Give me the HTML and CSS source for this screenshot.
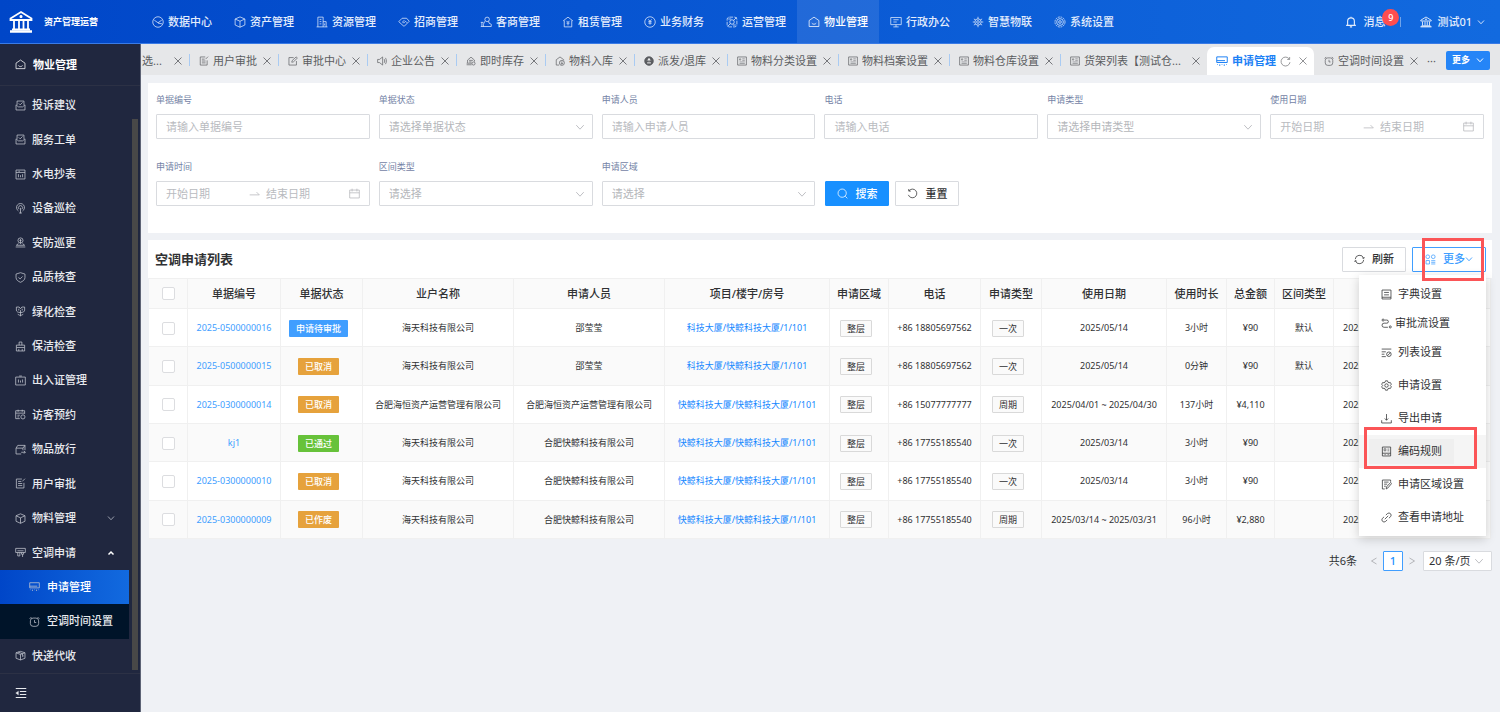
FILE: index.html
```html
<!DOCTYPE html>
<html lang="zh-CN">
<head>
<meta charset="utf-8">
<title>资产管理运营</title>
<link rel="stylesheet" href="styles.css">
</head>
<body>
<svg class="sprite" aria-hidden="true">
  <symbol id="bank" viewBox="0 0 24 24"><path d="M1.500 8.500 12 2l10.500 6.500v1.500h-21z" stroke-width="1.800"/><path d="M1 21.500h22" stroke-width="2.500"/><path d="M3 19.500h18M5 11v8M10 11v8M14.500 11v8M19 11v8" stroke-width="1.800"/><circle cx="12" cy="6.500" r="1" fill="currentColor"/></symbol>
  <symbol id="gauge" viewBox="0 0 16 16"><circle cx="8" cy="8" r="7"/><path d="M3 5.500 8 9l5-3.500M8 9.500l5.500 1"/></symbol>
  <symbol id="cube" viewBox="0 0 16 16"><path d="M8 1.200 14.500 4v8L8 15 1.500 12V4zM1.500 4 8 7l6.500-3M8 7v8"/></symbol>
  <symbol id="building" viewBox="0 0 16 16"><path d="M2.500 14.500v-13h7v13M9.500 7.500h4v7M.8 14.500h14.500M4.800 4.500h2.400M4.800 7.500h2.400M4.800 10.500h2.400M11.500 10v2.500"/></symbol>
  <symbol id="shake" viewBox="0 0 16 16"><path d="M1 7.500 5.500 3h6L15 7l-6.500 6.500L7 13zM8.500 5.500 6 8l1.500 1.500L10 7l2 2"/></symbol>
  <symbol id="merchant" viewBox="0 0 16 16"><circle cx="9.500" cy="4.500" r="3"/><path d="M6.500 7 4.500 11v3h10.500v-3l-3-1.500-.5-2.500M1 14h4M1 8.500h3.500M2.500 8.500V14"/></symbol>
  <symbol id="rent" viewBox="0 0 16 16"><path d="M1.500 6.500 8 1.500l6.500 5M3 6v8.500h10V6M6 6.500l2 2 2-2M8 8.500v4M6 9.500h4"/></symbol>
  <symbol id="yen" viewBox="0 0 16 16"><circle cx="8" cy="8" r="7"/><path d="m5.800 4.500 2.200 2.500 2.200-2.500M8 7v4.500M5.800 7.500h4.400M5.800 9.500h4.400"/></symbol>
  <symbol id="ops" viewBox="0 0 16 16"><rect x="1.500" y="1.500" width="13" height="13" rx="3" stroke-dasharray="5 1.500"/><circle cx="8" cy="8" r="3"/><path d="m2 14 4-4M10 6l4-4M3 4h4M9 12h4"/></symbol>
  <symbol id="home" viewBox="0 0 16 16"><path d="M8 1.500 14.500 6v8h-13V6zM5 9.500c1.500 2 4.500 2 6 0"/></symbol>
  <symbol id="monitor" viewBox="0 0 16 16"><path d="M1 2h14v9.500H1zM8 11.500v3M4.500 14.500h7M4.500 5h7M4.500 8h4.500"/></symbol>
  <symbol id="atom" viewBox="0 0 16 16"><circle cx="8" cy="8" r="1.800"/><circle cx="8" cy="8" r="4.200"/><path d="M8 1v3M8 12v3M1 8h2.500M12.500 8H15M2.500 4l2 1M13.500 4l-2 1M2.500 12l2-1M13.500 12l-2-1"/></symbol>
  <symbol id="gear" viewBox="0 0 16 16"><circle cx="8" cy="8" r="6.700" stroke-dasharray="2.500 1"/><circle cx="8" cy="8" r="4.500"/><circle cx="8" cy="8" r="1.800"/></symbol>
  <symbol id="bell" viewBox="0 0 16 16"><path d="M1.500 12.500h13M3.500 12V7a4.500 4.500 0 0 1 9 0v5M8 2.500V1M6.500 14.500h3"/></symbol>
  <symbol id="down" viewBox="0 0 16 16"><path d="m2 5 6 6.500L14 5"/></symbol>
  <symbol id="up" viewBox="0 0 16 16"><path d="m3 11 5-5 5 5"/></symbol>
  <symbol id="close" viewBox="0 0 16 16"><path d="m1 1 14 14M15 1 1 15"/></symbol>
  <symbol id="userdoc" viewBox="0 0 16 16"><path d="M10 1.500H2v13h11V7M4.500 5H9M4.500 8h6M4.500 11h6M10.500 5l4-4"/></symbol>
  <symbol id="edit" viewBox="0 0 16 16"><path d="M9 2.500H1.500v12h12V8M6 10l.5-2.500L13 1.500l2 1.800-6.500 6.200z"/></symbol>
  <symbol id="speaker" viewBox="0 0 16 16"><path d="M1 5.500h3l5-4v13l-5-4H1zM11.500 5c1 1.500 1 4.500 0 6M13.500 3c2 3 2 7 0 10"/></symbol>
  <symbol id="stock" viewBox="0 0 16 16"><path d="M2.500 11V6.500L8 1.800l5.500 4.700V9M1 11.500h8M1 14h8M5 7h6M5 9.500h4"/><circle cx="12" cy="12" r="2.500"/></symbol>
  <symbol id="inbound" viewBox="0 0 16 16"><path d="M6.500 14.500H2V6l6-4.500L14 6v1"/><circle cx="11" cy="11" r="4"/><path d="M11 8.500V13M9 11.500l2 1.500 2-1.500"/></symbol>
  <symbol id="dispatch" viewBox="0 0 16 16"><circle cx="8" cy="8" r="7" fill="currentColor"/><path d="M8 3.500v5M5.500 7 8 4.500 10.500 7M5 11h6" stroke="#fff" stroke-width="1.500"/></symbol>
  <symbol id="list" viewBox="0 0 16 16"><path d="M1 1.500h14v13H1z"/><path d="M4 4.500h2v2H4zM8.500 4.500h4M8.500 7h4M4 9.500h8.500M4 12h8.500" stroke-width=".8"/></symbol>
  <symbol id="aircon" viewBox="0 0 16 16"><path d="M1 2.500h14v7.500H1zM1 7.500h11M2 12.500v.8M5 12.500v2M8 12.500v.8M11 12.500v2M14 12.500v.8"/></symbol>
  <symbol id="clock" viewBox="0 0 16 16"><rect x="2" y="3" width="12" height="12" rx="4"/><path d="M8 6v3.500h2.500M1 4l2.500-2.500M15 4l-2.500-2.500"/></symbol>
  <symbol id="reload" viewBox="0 0 16 16"><path d="M13.500 4.500A6.500 6.500 0 1 0 14.500 9M14 1.500v3.500h-3.500"/></symbol>
  <symbol id="undo" viewBox="0 0 16 16"><path d="M3 4a6.300 6.300 0 1 1-1 6M2.500 1.500v3h3"/></symbol>
  <symbol id="sync" viewBox="0 0 16 16"><path d="M1.800 7.500A6.300 6.300 0 0 1 14 6M14.200 8.500A6.300 6.300 0 0 1 2 10M12.200 5.800l2 .7.800-2M3.800 10.200l-2-.7-.8 2"/></symbol>
  <symbol id="search" viewBox="0 0 16 16"><circle cx="7.500" cy="7.500" r="6"/><path d="m12 12 3 3"/></symbol>
  <symbol id="calendar" viewBox="0 0 16 16"><path d="M1 3h14v11.500H1zM1 7h14M4.500 1v4M11.500 1v4"/></symbol>
  <symbol id="swap" viewBox="0 0 16 16"><path d="M1 10h14l-4-4"/></symbol>
  <symbol id="mail" viewBox="0 0 16 16"><path d="M3 7V1.500h10V7M1.500 7v7.500h13V7L11 10H5zM5.500 5l2 2 3.500-3.500"/></symbol>
  <symbol id="meter" viewBox="0 0 16 16"><path d="M1.500 1.500h13v13h-13zM1.500 5h13M5 7.500V12M8 9v3M11 7.500V12M5 3.300h2"/></symbol>
  <symbol id="device" viewBox="0 0 16 16"><path d="M5 11.500a5.800 5.800 0 1 1 6 0M6 9a3 3 0 1 1 4 0M8 7v8M6 14.500h4"/></symbol>
  <symbol id="guard" viewBox="0 0 16 16"><circle cx="8" cy="5" r="3.700"/><path d="M8 3v7M6.500 5h3M5 9.500 2 12h12l-3-2.500M1 14.500h14"/></symbol>
  <symbol id="shield" viewBox="0 0 16 16"><path d="m8 1 6.500 2v5c0 3.500-3 5.500-6.500 7-3.500-1.500-6.500-3.500-6.500-7V3zM5 8l2.500 2L11 6.500"/></symbol>
  <symbol id="flower" viewBox="0 0 16 16"><path d="M2 1.500h4L8 4l2-2.500h4V6c0 2-2 3.500-6 3.500S2 8 2 6zM8 6v9M4 11.500c1 1.500 2 2 4 2s3-.5 4-2M5.500 4v2.500M10.500 4v2.500"/></symbol>
  <symbol id="clean" viewBox="0 0 16 16"><path d="M6 6V1.500h4V6M2 6h12v3.500H2zM2 9.500v5h12v-5M5.500 11.500v3M10.500 11.500v3"/></symbol>
  <symbol id="pass" viewBox="0 0 16 16"><path d="M1 3h14v11.500H1zM5 6.500V11M8 8v3M11 6.500V11M6 1.500h4"/></symbol>
  <symbol id="visit" viewBox="0 0 16 16"><path d="M7 14H1V2.500h13V7M1 6h13M4.500 1v3M10.500 1v3M3.500 9H7M3.500 11.500H6"/><circle cx="11.500" cy="11.500" r="3"/></symbol>
  <symbol id="goods" viewBox="0 0 16 16"><path d="M9 14.500H1.500V6h10v3M1.500 6 4 2h10.500L11.500 6M14.500 2v7M9 12h6l-2-2M15 12l-2 2"/></symbol>
  <symbol id="ac2" viewBox="0 0 16 16"><path d="M1 2h14v6H1zM3.500 5.500h9M4 8v5h3V8M9.500 8v2.500h3V8M11 10.500v4"/></symbol>
  <symbol id="parcel" viewBox="0 0 16 16"><path d="M8 2 14.500 4v8L8 14.500 1.500 12V4zM1.500 4 8 6.500 14.500 4M8 6.500v8M4.500 3l6.500 2.500v4l1.500-1"/></symbol>
  <symbol id="fold" viewBox="0 0 16 16"><path d="M1 2h14M6.500 6H15M6.500 10H15M1 14h14"/><path d="m4.500 5.500-3.500 2.500 3.500 2.500z" fill="currentColor" stroke-width=".5"/></symbol>
  <symbol id="grid" viewBox="0 0 16 16"><circle cx="4" cy="4" r="2.700"/><circle cx="12" cy="4" r="2.700"/><path d="M1.500 9.500h5v5h-5zM9 9.700h6M9 12.100h6M9 14.500h6"/></symbol>
  <symbol id="book" viewBox="0 0 16 16"><path d="M14.500 14.500h-13V1.500h13zM1.500 12h13M4.500 5h7M4.500 8.500h7"/></symbol>
  <symbol id="flow" viewBox="0 0 16 16"><circle cx="3" cy="3" r="1.500"/><path d="M5 3h3.500a2 2 0 0 1 0 4.500h-4a3 3 0 0 0 0 6H10"/><circle cx="13.500" cy="13" r="1.500"/></symbol>
  <symbol id="columns" viewBox="0 0 16 16"><path d="M1 3h14M1 7h6M1 10.500h4M1 14h6"/><circle cx="11.500" cy="10.500" r="3.300"/><path d="m9.500 12.500 4-4"/></symbol>
  <symbol id="setting" viewBox="0 0 16 16"><path d="m6.500 1.200-.6 2-1.500.9-2-.5L1 6.200 2.500 8 1 9.800l1.400 2.600 2-.5 1.500.9.600 2h3l.6-2 1.500-.9 2 .5L15 9.800 13.500 8 15 6.200l-1.400-2.600-2 .5-1.500-.9-.6-2z"/><circle cx="8" cy="8" r="2.500"/></symbol>
  <symbol id="export" viewBox="0 0 16 16"><path d="M8 1.500v9M5.500 8 8 10.500 10.500 8M1 10.500v4h14v-4"/></symbol>
  <symbol id="code" viewBox="0 0 16 16"><path d="M2 1.500h12v13H2zM2 10.500h12"/><path d="M4.500 4H7v3H4.500zM9.500 4.500H12M9.500 7H12M5 12.500h2M9.500 12.500H12" stroke-width=".8"/></symbol>
  <symbol id="area" viewBox="0 0 16 16"><path d="M14 4V1.500H2v13h3.500M4.500 4.500H11M4.500 7.500H9M4.500 10.500H7M7.500 14.500l.5-3L14 5l1.500 1.500-5.500 6.500z"/></symbol>
  <symbol id="link" viewBox="0 0 16 16"><path d="m7 4.500 2.500-2.300a3.200 3.200 0 0 1 4.500 4.500L11.500 9M9 11.500l-2.500 2.300A3.200 3.200 0 0 1 2 9.300L4.500 7M5.500 10.500l5-5"/></symbol>
  <symbol id="left" viewBox="0 0 16 16"><path d="M13 2 3 8l10 6"/></symbol>
  <symbol id="right" viewBox="0 0 16 16"><path d="m3 2 10 6-10 6"/></symbol>
</svg>

<header class="topbar">
  <div class="brand"><svg class="logo"><use href="#bank"/></svg><strong>资产管理运营</strong></div>
  <nav class="topnav">
    <a href="#"><svg><use href="#gauge"/></svg>数据中心</a>
    <a href="#"><svg><use href="#cube"/></svg>资产管理</a>
    <a href="#"><svg><use href="#building"/></svg>资源管理</a>
    <a href="#"><svg><use href="#shake"/></svg>招商管理</a>
    <a href="#"><svg><use href="#merchant"/></svg>客商管理</a>
    <a href="#"><svg><use href="#rent"/></svg>租赁管理</a>
    <a href="#"><svg><use href="#yen"/></svg>业务财务</a>
    <a href="#"><svg><use href="#ops"/></svg>运营管理</a>
    <a href="#" class="active"><svg><use href="#home"/></svg>物业管理</a>
    <a href="#"><svg><use href="#monitor"/></svg>行政办公</a>
    <a href="#"><svg><use href="#atom"/></svg>智慧物联</a>
    <a href="#"><svg><use href="#gear"/></svg>系统设置</a>
  </nav>
  <div class="account">
    <button type="button" class="message"><svg><use href="#bell"/></svg>消息<span class="badge">9</span></button>
    <button type="button" class="user"><svg><use href="#bank"/></svg>测试01<svg class="small"><use href="#down"/></svg></button>
  </div>
</header>

<div class="shell">
  <aside class="sidebar">
    <h2 class="side-title"><svg><use href="#home"/></svg>物业管理</h2>
    <nav class="side-list">
      <a href="#"><svg><use href="#mail"/></svg>投诉建议</a>
      <a href="#"><svg><use href="#mail"/></svg>服务工单</a>
      <a href="#"><svg><use href="#meter"/></svg>水电抄表</a>
      <a href="#"><svg><use href="#device"/></svg>设备巡检</a>
      <a href="#"><svg><use href="#guard"/></svg>安防巡更</a>
      <a href="#"><svg><use href="#shield"/></svg>品质核查</a>
      <a href="#"><svg><use href="#flower"/></svg>绿化检查</a>
      <a href="#"><svg><use href="#clean"/></svg>保洁检查</a>
      <a href="#"><svg><use href="#pass"/></svg>出入证管理</a>
      <a href="#"><svg><use href="#visit"/></svg>访客预约</a>
      <a href="#"><svg><use href="#goods"/></svg>物品放行</a>
      <a href="#"><svg><use href="#userdoc"/></svg>用户审批</a>
      <a href="#"><svg><use href="#cube"/></svg>物料管理<svg class="caret"><use href="#down"/></svg></a>
      <a href="#"><svg><use href="#ac2"/></svg>空调申请<svg class="caret open"><use href="#up"/></svg></a>
      <a href="#" class="sub current"><svg><use href="#aircon"/></svg>申请管理</a>
      <a href="#" class="sub"><svg><use href="#clock"/></svg>空调时间设置</a>
      <a href="#"><svg><use href="#parcel"/></svg>快递代收</a>
    </nav>
    <span class="side-thumb"></span>
    <button type="button" class="fold" aria-label="收起菜单"><svg><use href="#fold"/></svg></button>
  </aside>

  <div class="workspace">
    <div class="tabs">
      <div class="tab first"><span>选...</span><svg class="x"><use href="#close"/></svg></div>
      <div class="tab"><svg><use href="#userdoc"/></svg><span>用户审批</span><svg class="x"><use href="#close"/></svg></div>
      <div class="tab"><svg><use href="#edit"/></svg><span>审批中心</span><svg class="x"><use href="#close"/></svg></div>
      <div class="tab"><svg><use href="#speaker"/></svg><span>企业公告</span><svg class="x"><use href="#close"/></svg></div>
      <div class="tab"><svg><use href="#stock"/></svg><span>即时库存</span><svg class="x"><use href="#close"/></svg></div>
      <div class="tab"><svg><use href="#inbound"/></svg><span>物料入库</span><svg class="x"><use href="#close"/></svg></div>
      <div class="tab"><svg><use href="#dispatch"/></svg><span>派发/退库</span><svg class="x"><use href="#close"/></svg></div>
      <div class="tab"><svg><use href="#list"/></svg><span>物料分类设置</span><svg class="x"><use href="#close"/></svg></div>
      <div class="tab"><svg><use href="#list"/></svg><span>物料档案设置</span><svg class="x"><use href="#close"/></svg></div>
      <div class="tab"><svg><use href="#list"/></svg><span>物料仓库设置</span><svg class="x"><use href="#close"/></svg></div>
      <div class="tab long"><svg><use href="#list"/></svg><span>货架列表【测试仓...</span><svg class="x"><use href="#close"/></svg></div>
      <div class="tab selected"><svg><use href="#aircon"/></svg><span>申请管理</span><svg class="again"><use href="#reload"/></svg><svg class="x"><use href="#close"/></svg></div>
      <div class="tab last"><svg><use href="#clock"/></svg><span>空调时间设置</span><svg class="x"><use href="#close"/></svg></div>
      <span class="dots">···</span>
      <button type="button" class="tabs-more">更多<svg><use href="#down"/></svg></button>
    </div>

    <main class="content">
      <form class="filters">
        <div class="field"><label for="f1">单据编号</label><input id="f1" class="box" placeholder="请输入单据编号"></div>
        <div class="field"><label for="f2">单据状态</label><div class="pick"><select id="f2" class="box"><option>请选择单据状态</option></select><svg><use href="#down"/></svg></div></div>
        <div class="field"><label for="f3">申请人员</label><input id="f3" class="box" placeholder="请输入申请人员"></div>
        <div class="field"><label for="f4">电话</label><input id="f4" class="box" placeholder="请输入电话"></div>
        <div class="field"><label for="f5">申请类型</label><div class="pick"><select id="f5" class="box"><option>请选择申请类型</option></select><svg><use href="#down"/></svg></div></div>
        <div class="field"><label for="f6">使用日期</label><div class="box range"><input id="f6" placeholder="开始日期"><svg><use href="#swap"/></svg><input aria-label="使用日期结束" placeholder="结束日期"><svg><use href="#calendar"/></svg></div></div>
        <div class="field"><label for="f7">申请时间</label><div class="box range"><input id="f7" placeholder="开始日期"><svg><use href="#swap"/></svg><input aria-label="申请时间结束" placeholder="结束日期"><svg><use href="#calendar"/></svg></div></div>
        <div class="field"><label for="f8">区间类型</label><div class="pick"><select id="f8" class="box"><option>请选择</option></select><svg><use href="#down"/></svg></div></div>
        <div class="field"><label for="f9">申请区域</label><div class="pick"><select id="f9" class="box"><option>请选择</option></select><svg><use href="#down"/></svg></div></div>
        <div class="actions">
          <button type="button" class="btn primary"><svg><use href="#search"/></svg>搜索</button>
          <button type="button" class="btn"><svg><use href="#undo"/></svg>重置</button>
        </div>
      </form>

      <section class="listing">
        <div class="list-head">
          <h1>空调申请列表</h1>
          <button type="button" class="btn"><svg><use href="#sync"/></svg>刷新</button>
          <div class="more-wrap">
            <button type="button" class="btn outline"><svg><use href="#grid"/></svg><span>更多<svg class="small"><use href="#down"/></svg></span></button>
            <ul class="menu">
              <li><button type="button"><svg><use href="#book"/></svg>字典设置</button></li>
              <li class="tight"><button type="button"><svg><use href="#flow"/></svg>审批流设置</button></li>
              <li class="group-end"><button type="button"><svg><use href="#columns"/></svg>列表设置</button></li>
              <li class="tall"><button type="button"><svg><use href="#setting"/></svg>申请设置</button></li>
              <li class="tall"><button type="button"><svg><use href="#export"/></svg>导出申请</button></li>
              <li class="tall hover"><button type="button"><svg><use href="#code"/></svg>编码规则</button><span class="mark"></span></li>
              <li class="tall"><button type="button"><svg><use href="#area"/></svg>申请区域设置</button></li>
              <li class="tall"><button type="button"><svg><use href="#link"/></svg>查看申请地址</button></li>
            </ul>
            <span class="mark"></span>
          </div>
        </div>
        <table class="grid">
          <colgroup><col class="w-check"><col class="w-no"><col class="w-state"><col class="w-name"><col class="w-name"><col class="w-room"><col class="w-area"><col class="w-phone"><col class="w-type"><col class="w-date"><col class="w-time"><col class="w-sum"><col class="w-area"><col></colgroup>
          <thead>
            <tr><th><input type="checkbox" aria-label="全选"></th><th>单据编号</th><th>单据状态</th><th>业户名称</th><th>申请人员</th><th>项目/楼宇/房号</th><th>申请区域</th><th>电话</th><th>申请类型</th><th>使用日期</th><th>使用时长</th><th>总金额</th><th>区间类型</th><th></th></tr>
          </thead>
          <tbody>
            <tr><td><input type="checkbox" aria-label="选择"></td><td><a href="#">2025-0500000016</a></td><td><span class="state blue">申请待审批</span></td><td>海天科技有限公司</td><td>邵莹莹</td><td><a href="#" class="room">科技大厦/快鲸科技大厦/1/101</a></td><td><span class="chip">整层</span></td><td>+86 18805697562</td><td><span class="chip">一次</span></td><td>2025/05/14</td><td>3小时</td><td>¥90</td><td>默认</td><td>2025</td></tr>
            <tr><td><input type="checkbox" aria-label="选择"></td><td><a href="#">2025-0500000015</a></td><td><span class="state amber">已取消</span></td><td>海天科技有限公司</td><td>邵莹莹</td><td><a href="#" class="room">科技大厦/快鲸科技大厦/1/101</a></td><td><span class="chip">整层</span></td><td>+86 18805697562</td><td><span class="chip">一次</span></td><td>2025/05/14</td><td>0分钟</td><td>¥90</td><td>默认</td><td>2025</td></tr>
            <tr><td><input type="checkbox" aria-label="选择"></td><td><a href="#">2025-0300000014</a></td><td><span class="state amber">已取消</span></td><td>合肥海恒资产运营管理有限公司</td><td>合肥海恒资产运营管理有限公司</td><td><a href="#" class="room">快鲸科技大厦/快鲸科技大厦/1/101</a></td><td><span class="chip">整层</span></td><td>+86 15077777777</td><td><span class="chip">周期</span></td><td>2025/04/01 ~ 2025/04/30</td><td>137小时</td><td>¥4,110</td><td></td><td>2025</td></tr>
            <tr><td><input type="checkbox" aria-label="选择"></td><td><a href="#">kj1</a></td><td><span class="state green">已通过</span></td><td>海天科技有限公司</td><td>合肥快鲸科技有限公司</td><td><a href="#" class="room">快鲸科技大厦/快鲸科技大厦/1/101</a></td><td><span class="chip">整层</span></td><td>+86 17755185540</td><td><span class="chip">一次</span></td><td>2025/03/14</td><td>3小时</td><td>¥90</td><td></td><td>2025</td></tr>
            <tr><td><input type="checkbox" aria-label="选择"></td><td><a href="#">2025-0300000010</a></td><td><span class="state amber">已取消</span></td><td>海天科技有限公司</td><td>合肥快鲸科技有限公司</td><td><a href="#" class="room">快鲸科技大厦/快鲸科技大厦/1/101</a></td><td><span class="chip">整层</span></td><td>+86 17755185540</td><td><span class="chip">一次</span></td><td>2025/03/14</td><td>3小时</td><td>¥90</td><td></td><td>2025</td></tr>
            <tr><td><input type="checkbox" aria-label="选择"></td><td><a href="#">2025-0300000009</a></td><td><span class="state amber">已作废</span></td><td>海天科技有限公司</td><td>合肥快鲸科技有限公司</td><td><a href="#" class="room">快鲸科技大厦/快鲸科技大厦/1/101</a></td><td><span class="chip">整层</span></td><td>+86 17755185540</td><td><span class="chip">周期</span></td><td>2025/03/14 ~ 2025/03/31</td><td>96小时</td><td>¥2,880</td><td></td><td>2025</td></tr>
          </tbody>
        </table>
      </section>

      <div class="pager">
        <span>共6条</span>
        <button type="button" class="arrow" aria-label="上一页"><svg><use href="#left"/></svg></button>
        <button type="button" class="page">1</button>
        <button type="button" class="arrow" aria-label="下一页"><svg><use href="#right"/></svg></button>
        <div class="pick size"><select aria-label="每页条数"><option>20 条/页</option></select><svg><use href="#down"/></svg></div>
      </div>
    </main>
  </div>
</div>
</body>
</html>
```
FILE: styles.css
```css
* { box-sizing: border-box; }
body {
  margin: 0;
  min-height: 100vh;
  display: flex;
  flex-direction: column;
  background: #eff1f5;
  color: #303133;
  font: 11px/16px "Noto Sans", "Noto Sans CJK SC", sans-serif;
}
.sprite { position: absolute; width: 0; height: 0; }
svg {
  width: 12px;
  height: 12px;
  flex: none;
  fill: none;
  stroke: currentColor;
  stroke-width: 1.1;
}
svg.small { width: 8px; height: 8px; stroke-width: 1.8; }
a { color: inherit; text-decoration: none; }
button, input, select { font: inherit; color: inherit; margin: 0; padding: 0; border: 0; background: none; }
h1, h2, ul { margin: 0; padding: 0; list-style: none; }

/* top bar */
.topbar {
  height: 44px;
  display: flex;
  background: linear-gradient(90deg, #0046c8, #126adf);
  border-bottom: 1px solid #3a7be6;
  color: #e4edfc;
  font-weight: 500;
}
.brand { width: 141px; padding-left: 9px; display: flex; align-items: center; gap: 11px; font-size: 9px; color: #fff; }
.logo { width: 24px; height: 24px; }
.topnav { display: flex; }
.topnav a { width: 82px; display: flex; align-items: center; justify-content: center; gap: 4px; white-space: nowrap; }
.topnav svg { stroke-width: 1; }
.topnav .active { background: rgba(255, 255, 255, .1); color: #fff; }
.account { margin-left: auto; padding-right: 15px; display: flex; align-items: center; gap: 19px; }
.account button { display: flex; align-items: center; font-weight: 500; }
.message { position: relative; gap: 6px; padding-right: 16px; line-height: 12px; }
.message::after { content: ""; position: absolute; right: 0; top: 1px; width: 1px; height: 10px; background: rgba(255, 255, 255, .4); }
.message svg { stroke-width: 1.5; }
.user { gap: 5px; }
.user svg:first-child { stroke-width: 1.5; }
.badge {
  position: absolute;
  right: 2px;
  top: -7px;
  width: 17px;
  height: 17px;
  border-radius: 9px;
  background: #ff4d4f;
  color: #fff;
  font-size: 9px;
  line-height: 17px;
}

/* side menu */
.shell { flex: 1; display: flex; }
.sidebar {
  position: relative;
  width: 141px;
  flex: none;
  display: flex;
  flex-direction: column;
  background: #20273f;
  border-right: 1px solid #5d6375;
  color: #e8eaee;
}
.side-title { height: 42px; padding-left: 15px; display: flex; align-items: center; gap: 7px; font-size: 11px; color: #fff; border-bottom: 1px solid #2c3145; }
.side-title svg, .side-list svg { width: 11px; height: 11px; }
.side-list > a > svg:first-child { color: #c3c7d0; }
.side-list { flex: 1; display: grid; grid-auto-rows: 1fr; padding: 2px 11px 0 0; font-weight: 500; }
.side-list a { display: flex; align-items: center; gap: 6px; padding: 0 14px 0 15px; }
.side-list .sub { padding-left: 29px; gap: 7px; background: #001429; }
.side-list .current { background: linear-gradient(90deg, #0046c8, #126adf); color: #fff; }
.side-list svg.caret { width: 8px; height: 8px; margin-left: auto; stroke-width: 2; color: #9a9fad; }
.side-list svg.open { stroke-width: 3; color: #fff; }
.side-thumb { position: absolute; right: 2px; top: 75px; bottom: 42px; width: 6px; background: #484848; }
.fold { height: 39px; padding-left: 15px; display: flex; align-items: center; border-top: 1px solid #2c3145; }
.fold svg { stroke-width: 1.5; }

/* page tabs */
.workspace { flex: 1; min-width: 0; }
.tabs { height: 31px; display: flex; align-items: center; background: #e6e7e9; color: #5a5c60; padding: 3px 10px 0 0; white-space: nowrap; }
.tab { position: relative; display: flex; align-items: center; gap: 4px; padding: 0 7px 0 10px; height: 28px; }
.tab svg { width: 10px; height: 10px; }
.tab svg.x { width: 8px; height: 8px; margin-left: 2px; stroke-width: 1.6; }
.tab + .tab::before { content: ""; position: absolute; left: 0; top: 7px; width: 1px; height: 12px; background: #a9cbf3; }
.tab.first { width: 48px; padding-left: 1px; }
.tab.first .x { margin-left: auto; }
.tab.long { width: 147px; }
.tab.long .x { margin-left: auto; }
.tab.selected { background: #fff; color: #1b80f5; border-radius: 7px 7px 0 0; font-weight: 700; width: 107px; }
.tab.selected svg.x, .tab.selected .again { color: #77797c; }
.tab.selected .again { width: 11px; height: 11px; }
.tab.selected svg.x { margin-left: auto; }
.tab.selected svg:first-child { width: 12px; height: 12px; stroke-width: 1.3; margin-left: -1px; }
.tab.selected::before, .tab.selected + .tab::before { display: none; }
.dots { margin-left: 2px; }
.tabs-more {
  margin: 0 0 2px auto;
  width: 44px;
  height: 19px;
  display: flex;
  align-items: center;
  justify-content: center;
  gap: 6px;
  border-radius: 2px;
  background: #2585f7;
  color: #fff;
  font-size: 9px;
  font-weight: 700;
}
.tabs-more svg { width: 8px; height: 8px; stroke-width: 2; }

/* filters */
.content { padding: 8px 8px 0 7px; }
.filters {
  display: grid;
  grid-template-columns: repeat(6, minmax(0, 1fr));
  gap: 19px 9px;
  padding: 8px 8px 27px;
  background: #fff;
}
.field { display: flex; flex-direction: column; gap: 6px; }
.field label { font-size: 9px; line-height: 17px; color: #7483a6; }
.box { width: 100%; height: 25px; padding: 0 9px; background: #fff; border: 1px solid #d9dbdf; border-radius: 1px; color: #b4b6ba; }
.box::placeholder, .range input::placeholder { color: #b9bbbf; opacity: 1; }
.pick { position: relative; }
.pick select { appearance: none; }
.pick svg { position: absolute; right: 8px; top: 8px; width: 10px; height: 10px; color: #b0b2b6; stroke-width: 1.3; pointer-events: none; }
.range { display: flex; align-items: center; gap: 6px; padding-right: 9px; }
.range input { flex: 1; min-width: 0; }
.range svg { width: 11px; height: 11px; color: #b4b6ba; }
.actions { display: flex; align-items: flex-end; gap: 6px; padding-left: 1px; }
.btn {
  width: 64px;
  height: 25px;
  display: flex;
  align-items: center;
  justify-content: center;
  gap: 7px;
  background: #fff;
  border: 1px solid #d9dbdf;
  border-radius: 1px;
  color: #303133;
  font-weight: 500;
}
.btn svg { width: 11px; height: 11px; }
.btn.primary { background: #1890ff; border-color: #1890ff; color: #fff; }
.btn.outline { width: 74px; color: #409eff; border-color: #409eff; }
.btn.outline svg.small { width: 8px; height: 8px; }

/* list */
.listing { margin-top: 7px; }
.list-head { height: 38px; display: flex; align-items: center; gap: 6px; padding: 0 6px 0 7px; background: #fff; }
.list-head h1 { margin-right: auto; font-size: 13px; font-weight: 700; line-height: 18px; }
.more-wrap { position: relative; }
.mark { position: absolute; border: 3px solid #fb5557; pointer-events: none; z-index: 3; }
.more-wrap > .mark { left: 10px; right: 2px; top: -9px; bottom: -9px; }
.menu {
  position: absolute;
  right: 0;
  top: 28px;
  z-index: 2;
  width: 127px;
  padding: 5px 0 2px;
  background: #fff;
  box-shadow: 0 3px 10px rgba(0, 0, 0, .18);
}
.menu li { position: relative; height: 29px; }
.menu .group-end { margin-bottom: 2px; }
.menu .tall { height: 33px; }
.menu button { width: 100%; height: 100%; display: flex; align-items: center; gap: 6px; padding-left: 22px; }
.menu svg { width: 11px; height: 11px; }
.menu .tight button { gap: 3px; }
.menu .hover { background: linear-gradient(#efefef, #efefef) 10px 4px / 85px 25px no-repeat #f5f5f5; }
.menu .mark { left: 5px; right: 9px; top: -8px; bottom: -1px; }
.grid { width: calc(100% - 2px); margin-left: 1px; height: 261px; table-layout: fixed; border-collapse: separate; border-spacing: 0; background: #fff; }
.w-check { width: 39px; }
.w-no { width: 93px; }
.w-state { width: 82px; }
.w-name { width: 151px; }
.w-room { width: 165px; }
.w-area { width: 59px; }
.w-phone { width: 92px; }
.w-type { width: 61px; }
.w-date { width: 125px; }
.w-time { width: 60px; }
.w-sum { width: 48px; }
th, td { padding: 0; text-align: center; vertical-align: middle; border: solid #f0f0f0; border-width: 0 1px 1px 0; white-space: nowrap; }
th { height: 31px; background: #fafafa; border-top-width: 1px; font-weight: 500; }
td { height: 38px; padding-top: 1px; font-size: 9px; line-height: 14px; }
td:last-child { text-align: left; padding-left: 9px; }
tbody tr:nth-child(even) { background: #fafafa; }
tbody tr:last-child { background: #fafafa; }
td a { color: #409eff; }
td a.room { color: #1687ff; }
input[type="checkbox"] { display: block; margin: auto; appearance: none; width: 13px; height: 13px; background: #fff; border: 1px solid #dcdde0; border-radius: 2px; }
.state { display: inline-block; margin-right: 6px; padding: 0 7px; line-height: 17px; border-radius: 1px; color: #fff; font-weight: 500; }
.blue { background: #409eff; }
.amber { background: #e6a23c; }
.green { background: #67c23a; }
.chip { display: inline-block; margin-right: 6px; padding: 0 6px; line-height: 15px; background: #fafafa; border: 1px solid #d9d9d9; border-radius: 1px; }

/* pager */
.pager { margin-top: 12px; display: flex; align-items: center; justify-content: flex-end; gap: 4px; }
.pager > span { margin-right: 8px; }
.arrow { width: 10px; height: 20px; display: flex; align-items: center; justify-content: center; color: #a4a6aa; }
.arrow svg { width: 8px; height: 8px; stroke-width: 1.6; }
.page { width: 20px; height: 20px; border: 1px solid #409eff; border-radius: 1px; background: #fff; color: #1890ff; font-weight: 500; }
.size { margin-left: 2px; }
.size select { width: 69px; height: 20px; padding-left: 5px; background: #fff; border: 1px solid #d9dbdf; border-radius: 1px; }
.size svg { top: 5px; }
```
